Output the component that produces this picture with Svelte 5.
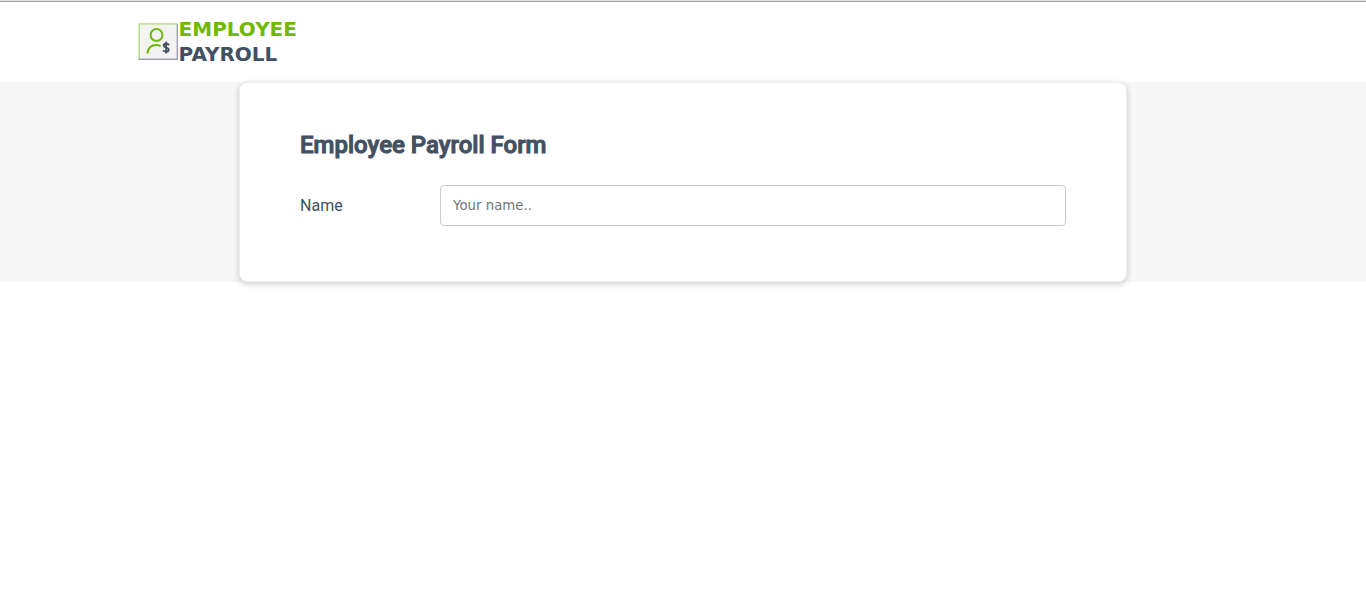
<script>
  let name = $state('');
</script>

<header class="header">
  <div class="brand">
    <svg class="logo" viewBox="0 0 40 38" aria-hidden="true">
      <rect x="0.5" y="0" width="39.5" height="37" fill="#f3f3f3" />
      <path d="M1.2 36V0.9H39" fill="none" stroke="#b0de76" stroke-width="1.4" />
      <path d="M39.3 1V36" fill="none" stroke="#9da2ab" stroke-width="1.4" />
      <path d="M0.5 36.2H40" fill="none" stroke="#9da2ab" stroke-width="1.4" />
      <circle cx="18.5" cy="12" r="5.9" fill="none" stroke="#70b900" stroke-width="2" />
      <path d="M9.5 30.5C9.5 25 13.5 22 18 22C19.8 22 21.3 22.4 22.6 23.2" fill="none" stroke="#70b900" stroke-width="2" />
      <path d="M31 22C30.2 21.2 29.3 20.8 28.1 20.8C26.5 20.8 25.7 21.5 25.7 22.5C25.7 25.2 30.7 23.9 30.7 26.7C30.7 27.9 29.7 28.6 28.1 28.6C26.9 28.6 25.9 28.2 25 27.4M28.1 18.8V30.6" fill="none" stroke="#425062" stroke-width="1.9" />
    </svg>
    <div class="brand-text">
      <span class="employee">EMPLOYEE</span>
      <span class="payroll">PAYROLL</span>
    </div>
  </div>
</header>

<main class="content">
  <form class="card">
    <h1>Employee Payroll Form</h1>
    <div class="row">
      <label for="name">Name</label>
      <input id="name" name="name" type="text" placeholder="Your name.." bind:value={name} />
    </div>
  </form>
</main>

<style>
  :global(body) {
    margin: 0;
    background: #fff;
  }

  :global(#app) {
    padding-bottom: 16px;
  }

  .header {
    box-sizing: border-box;
    padding: 15px 10% 14px;
    border-top: 1px solid #e3e3e3;
    background: #fff;
    box-shadow: inset 0 1px #a5a5a5;
  }

  .brand {
    display: flex;
    align-items: center;
    gap: 1px;
    padding: 1px;
  }

  .logo {
    display: block;
    width: 40px;
    height: 38px;
  }

  .brand-text {
    display: flex;
    flex-direction: column;
    font: bold 20px/25px "DejaVu Sans", Verdana, sans-serif;
  }

  .employee {
    color: #70b900;
  }

  .payroll {
    color: #425062;
  }

  .content {
    background: #f7f7f7;
  }

  .card {
    box-sizing: border-box;
    width: 65%;
    margin: 0 auto;
    padding: 44px 60px 55px;
    border: 1px solid #eee;
    border-radius: 8px;
    background: #fff;
    box-shadow: 0 2px 6px rgba(0, 0, 0, 0.2);
    font-family: Roboto, sans-serif;
    color: #425062;
  }

  h1 {
    margin: 0 0 22px;
    font-size: 24px;
    line-height: 36px;
    font-weight: 500;
    -webkit-text-stroke: 1px currentColor;
  }

  .row {
    display: flex;
    align-items: center;
  }

  label {
    flex: 0 0 140px;
    font-size: 16px;
    line-height: 20px;
  }

  input {
    box-sizing: border-box;
    flex: 1;
    min-width: 0;
    padding: 11px 12px;
    border: 1px solid #ccc;
    border-radius: 4px;
    background: #fff;
    color: #425062;
    font-family: "DejaVu Sans", Verdana, sans-serif;
    line-height: 17px;
  }

  input::placeholder {
    color: #757575;
  }
</style>
